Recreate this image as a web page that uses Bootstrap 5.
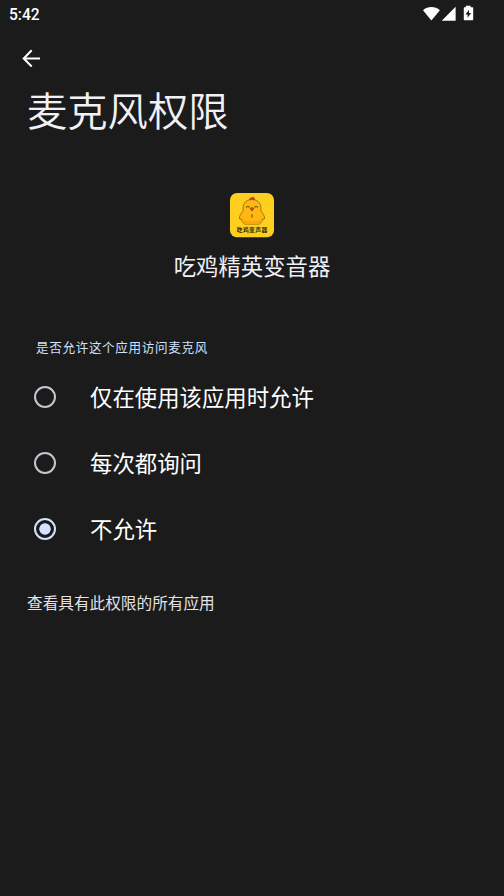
<!DOCTYPE html>
<html lang="zh-CN" data-bs-theme="dark">
<head>
<meta charset="utf-8">
<meta name="viewport" content="width=device-width, initial-scale=1">
<title>麦克风权限</title>
<link href="https://cdn.jsdelivr.net/npm/bootstrap@5.3.0/dist/css/bootstrap.min.css" rel="stylesheet">
<style>
body { background: #1b1b1b; color: #f1f0f4; font-family: "Noto Sans CJK SC", sans-serif; height: 896px; overflow: hidden; }
svg { display: block; flex: none; }
.status-bar { height: 28px; padding: 0 30px 0 9px; font: 500 15.6px/28px Roboto, sans-serif; color: #fff; }
.status-bar span { padding-top: 1px; }
.toolbar { height: 60px; padding: 0 22px; }
.page-title { font-size: 40.3px; line-height: 48px; font-weight: 350; color: #f1f0f4; margin: -3px 0 0 27px; }
.app-head { margin-top: 60px; }
.app-name { font-size: 22.4px; line-height: 32px; margin-top: 11px; }
.group-label { font-size: 12.6px; line-height: 20px; letter-spacing: .63px; color: #cfe1ff; margin: 56px 0 0 36px; }
.choices { margin-top: 7px; }
.option { height: 66px; padding-left: 34px; gap: 34px; font-size: 22.4px; line-height: 32px; color: #fff; }
.option span { padding-bottom: 2px; }
.option .form-check-input { width: 22px; height: 22px; margin: 0; flex: none; border: 2px solid #c4c6d0; background: transparent; box-shadow: none; }
.option .form-check-input:checked { border-color: #d3e3fd; background: radial-gradient(circle, #d3e3fd 5.3px, transparent 6.1px); }
.all-apps { font-size: 15.65px; line-height: 24px; margin: 29px 0 0 27px; color: #e3e2e6; }
</style>
</head>
<body>
<header>
  <div class="status-bar d-flex align-items-center justify-content-between">
    <span>5:42</span>
    <svg width="52" height="18" viewBox="0 0 52 18" fill="#fff">
      <path d="M1 5.200C5.800.8 13.100.8 17.900 5.200L9.400 15.600z"/>
      <path d="M33.600 1.700V15.800H19.700z"/>
      <path fill-rule="evenodd" d="M43.800.8h4.800v1.500h1.900q.7 0 .7.7v11.500q0 .7-.7.7h-8q-.7 0-.7-.7V3q0-.7.7-.7h1.300zM47 4.800l-3.500 4.600h2.100v3.400l3.500-4.700H47z"/>
    </svg>
  </div>
  <nav class="toolbar d-flex align-items-center">
    <a href="#" aria-label="返回"><svg width="19" height="19" viewBox="0 0 19 19" fill="none" stroke="#fff" stroke-width="2"><path d="M18 9.500H2M9.700 1.300L1.700 9.500l8 8"/></svg></a>
  </nav>
</header>
<main>
  <h1 class="page-title">麦克风权限</h1>
  <section class="app-head d-flex flex-column align-items-center">
    <svg width="44" height="45" viewBox="0 0 44 45">
      <rect width="44" height="44.300" rx="7" fill="#ffcf20"/>
      <path d="M19.500 6.900q-.4-2 1.500-1.700.6-1.500 1.700-.4.900-1.600 1.300.5 1.100 0 .6 1.600z" fill="#d32f1a" stroke="#6b2410" stroke-width=".4"/>
      <path d="M22 6.600c-5.400 0-8.900 3.400-8.900 8.200 0 1.800.1 2.700-.5 3.900-1.700 2-3.200 4.300-3.200 6.400 0 1.300.9 1.300 1.800.7.400 2 1.400 3.700 3.400 5.300h14.800c2-1.600 3-3.300 3.400-5.300.9.600 1.800.6 1.800-.7 0-2.100-1.500-4.400-3.200-6.400-.6-1.200-.5-2.100-.5-3.900C30.900 10 27.400 6.600 22 6.600z" fill="#ffb810" stroke="#86540e" stroke-width=".7"/>
      <path d="M12.500 26.500q9.500 3.500 19 0-.8 2.700-2.600 4.200H15.100q-1.800-1.500-2.600-4.200z" fill="#ffa60e"/>
      <path d="M15.900 14.200q1.700-1.100 3.800-.2M28.100 14.200q-1.700-1.100-3.800-.2M21.400 21.500l.8.500-.3 2.500" fill="none" stroke="#4b2e0a" stroke-width=".9"/>
      <path d="M20.200 15.500q1.800-1.800 3.600 0L22 18z" fill="#d95516" stroke="#54330b" stroke-width=".6"/>
      <text x="22" y="39.300" text-anchor="middle" font-family="Noto Sans CJK SC, sans-serif" font-size="5.800" font-weight="700" fill="#302506" textLength="30.500">吃鸡变声器</text>
    </svg>
    <div class="app-name">吃鸡精英变音器</div>
  </section>
  <section>
    <div class="group-label" id="choices">是否允许这个应用访问麦克风</div>
    <div role="radiogroup" aria-labelledby="choices" class="choices">
      <label class="option d-flex align-items-center"><input class="form-check-input" type="radio" name="mic"><span>仅在使用该应用时允许</span></label>
      <label class="option d-flex align-items-center"><input class="form-check-input" type="radio" name="mic"><span>每次都询问</span></label>
      <label class="option d-flex align-items-center"><input class="form-check-input" type="radio" name="mic" checked><span>不允许</span></label>
    </div>
  </section>
  <div class="all-apps">查看具有此权限的所有应用</div>
</main>
<script src="https://cdn.jsdelivr.net/npm/bootstrap@5.3.0/dist/js/bootstrap.bundle.min.js"></script>
</body>
</html>
